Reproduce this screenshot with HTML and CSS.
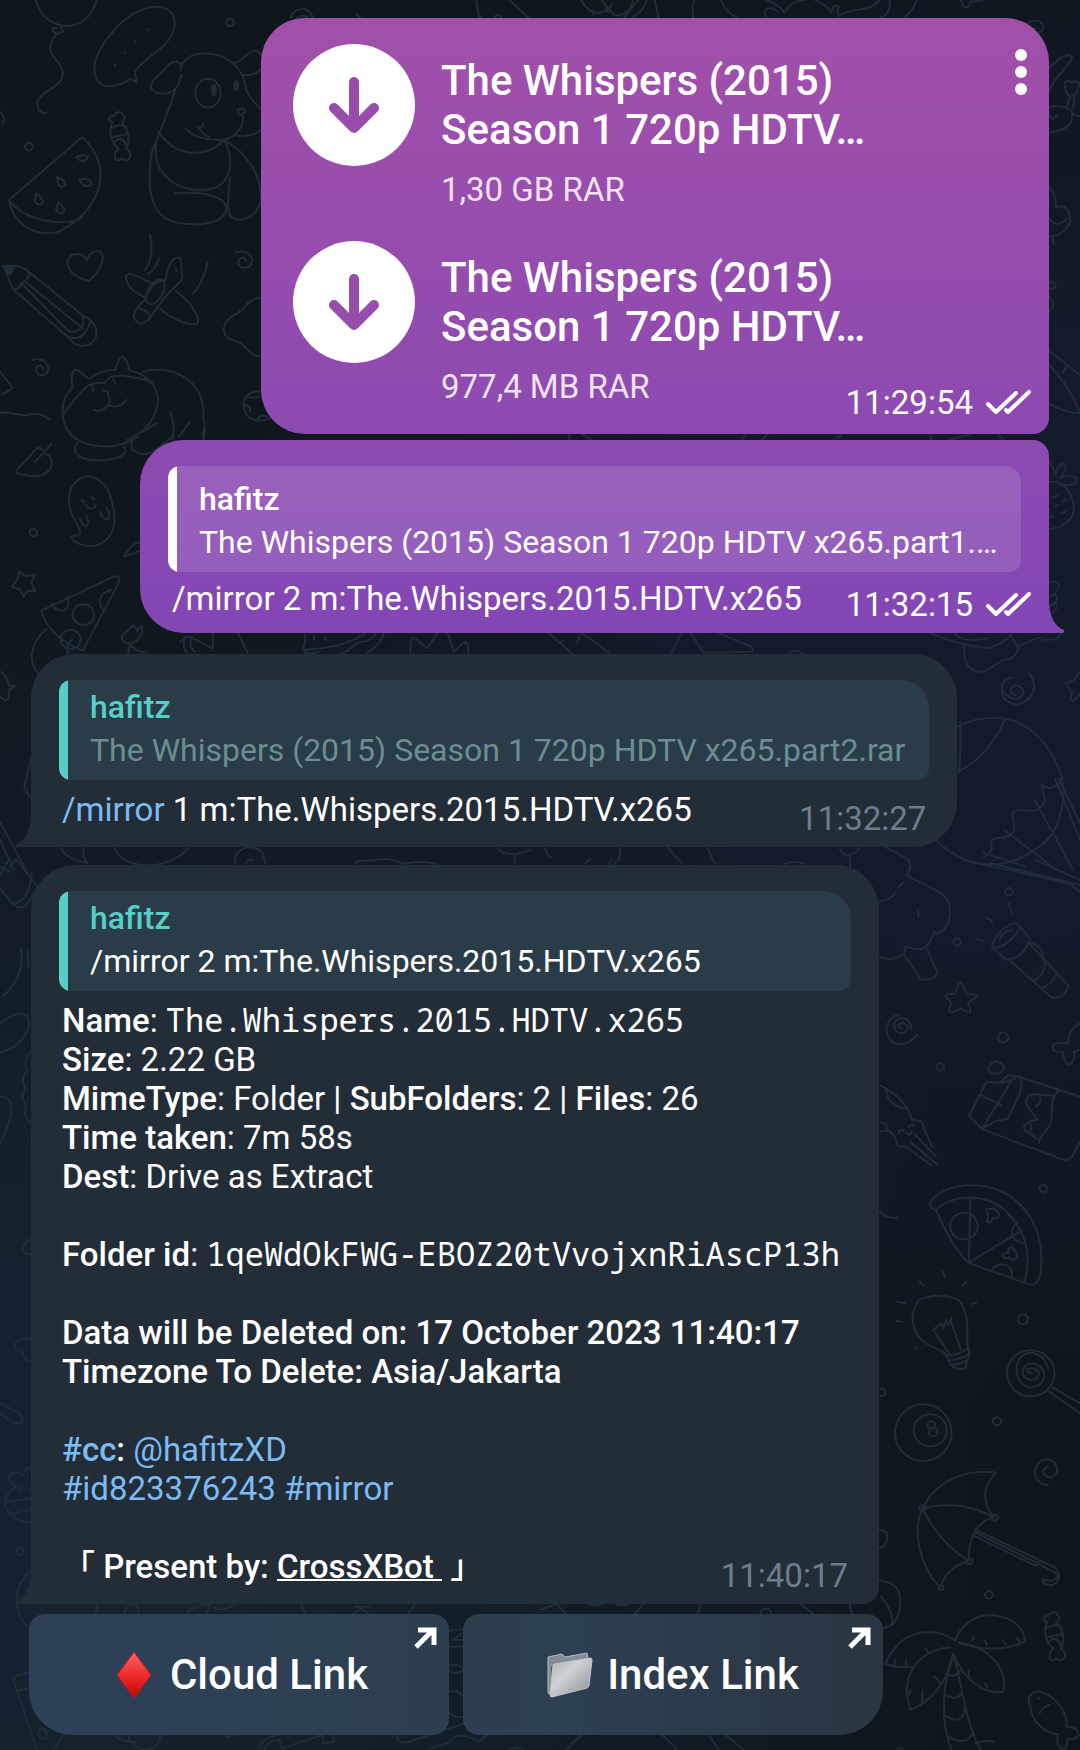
FILE: index.html
```html
<!DOCTYPE html>
<html lang="en">
<head>
<meta charset="utf-8">
<meta name="viewport" content="width=device-width, initial-scale=1">
<title>Chat</title>
<link rel="stylesheet" href="styles.css">
</head>
<body>
<svg class="wallpaper" viewBox="0 0 1080 1750" preserveAspectRatio="xMidYMin slice" aria-hidden="true">
  <defs>
    <g id="candy"><path d="M327 367C312 362 316 345 330 349C337 333 357 334 356 346C366 349 363 363 354 367C376 390 378 430 366 447C380 452 384 472 370 479C364 484 358 476 352 476C344 486 330 480 334 470C332 458 340 450 345 446C322 430 314 390 327 367ZM325 385Q342 370 363 379M327 412Q350 406 371 402M329 432C338 410 362 412 367 440"/></g>
    <g id="dot"><circle r="11"/></g>
  </defs>
  <!-- top left -->
  <g transform="scale(.3444 .3333)">
    <path d="M104 0C115 50 155 78 196 78C240 76 270 45 280 0M165 84C150 80 148 92 160 98C165 105 172 103 174 97C184 100 186 88 176 82M165 100C130 145 150 165 175 195C210 260 110 270 108 310Q110 342 135 339"/>
    <path d="M392 218C400 180 505 145 508 70C505 20 460 10 410 30C340 60 265 160 275 220C285 275 345 262 378 236L396 247Z"/>
    <path d="M428 90h1M392 126h1M363 159h1M333 195h1"/>
    <path d="M525 212C535 180 500 175 480 205C470 220 430 245 440 265C455 290 495 283 510 265C520 250 525 235 526 225M526 194C550 160 590 155 630 165C665 172 700 205 712 250C715 290 735 300 755 325M678 190C710 185 715 150 745 152L760 165M705 225C735 230 750 215 760 205M510 265C490 340 470 375 455 420C425 470 435 580 440 590C460 670 520 675 580 672C640 670 665 640 655 615C640 585 590 575 510 579M460 395C510 475 600 475 650 420C680 470 675 545 620 565C540 585 440 540 453 430M650 420C720 460 760 530 758 600C745 655 700 670 670 650C655 620 665 590 668 535M690 330Q702 322 713 332Q705 348 692 342ZM705 345C710 380 680 420 640 420C600 420 560 410 538 385M576 383C590 385 590 375 590 370M578 385Q585 400 605 410M680 405Q730 415 757 390"/>
    <ellipse cx="604" cy="279" rx="37" ry="43"/><ellipse class="fill" cx="621" cy="271" rx="6" ry="15"/><ellipse class="fill" cx="686" cy="257" rx="5" ry="14"/>
    <use href="#candy"/><use href="#dot" x="84" y="440"/><use href="#dot" x="668" y="67"/>
    <path d="M238 412L26 600C40 680 110 712 170 695C260 650 305 570 288 490Q272 440 238 412ZM26 600C70 660 180 685 240 652M220 472Q240 460 256 470Q250 485 235 483ZM166 532Q190 540 190 556Q178 566 168 552ZM230 538Q265 532 265 555Q245 568 230 538ZM106 580Q130 600 122 612Q105 618 101 600ZM170 607Q190 625 185 638Q168 646 163 628Z"/>
    <path d="M259 843C200 830 185 790 203 769C220 755 245 763 251 780C262 755 285 745 297 762C305 790 280 825 259 843Z"/>
    <path d="M10 798Q60 790 86 818Q140 862 242 948C285 965 290 1010 265 1030C240 1045 215 1038 196 1010L38 868ZM38 868Q58 870 62 850Q80 845 86 818M62 850L200 995Q245 1000 242 948M78 850L240 985M196 1010Q240 1030 262 968"/>
    <path class="fill" d="M10 798L38 805Q38 822 22 825Z"/>
    <path d="M435 704Q450 770 420 812M462 774Q450 810 430 822M603 788Q590 850 560 882M480 843C485 800 500 770 520 773C535 785 520 800 530 830C520 860 500 860 485 885C450 920 440 970 405 970C370 950 400 920 420 900C440 850 455 840 480 843ZM440 850C400 830 370 810 365 830C370 870 400 880 420 892M510 873C550 900 580 950 575 970C550 980 500 960 464 925M403 925Q430 930 435 950M511 805v8"/>
    <ellipse cx="451" cy="876" rx="22" ry="40" transform="rotate(28 451 876)"/>
    <path d="M684 758C720 745 745 775 725 798C705 812 685 795 695 778Q705 765 715 782M94 1080C130 1070 150 1100 135 1120C115 1135 98 1115 108 1100Q120 1090 125 1107M758 895C720 890 715 930 680 945C640 970 640 1015 680 1022C720 1030 715 1065 758 1070"/>
    <path d="M210 1165C205 1130 210 1105 225 1110L258 1137Q290 1110 334 1110Q345 1070 356 1070Q368 1075 376 1112C420 1120 450 1150 458 1190C462 1260 410 1300 370 1320M210 1165C170 1200 180 1260 195 1290L225 1320M183 1245C230 1180 250 1140 305 1150C320 1110 380 1130 445 1145M415 1115C520 1090 600 1160 590 1250Q600 1300 590 1325M300 1172L315 1175C310 1190 325 1200 315 1215Q290 1240 272 1230M315 1215Q340 1230 368 1200M267 1158l5 14M328 1137l6 15M495 1235Q510 1290 500 1320M405 1300L455 1270M520 1310L550 1268M0 1115L38 1165M5 1185L32 1168M0 1238C40 1235 60 1250 80 1245Q120 1235 145 1260"/>
    <path d="M755 1175C720 1170 705 1200 708 1220C712 1260 750 1270 785 1255M710 1215Q730 1215 725 1235M715 1190Q735 1195 750 1190M745 1262Q755 1240 775 1250"/>
    <path d="M845 54C850 20 900 15 908 54M862 54Q880 40 895 54M1035 42L1045 52M1383 0Q1385 30 1395 54M1478 0L1535 54M1435 54Q1445 35 1458 54M0 335Q18 355 8 370"/>
  </g>
  <!-- top right -->
  <g transform="translate(540 0) scale(.3444 .3333)">
    <path d="M120 0Q140 40 175 38Q205 30 210 10M178 0L215 45Q260 50 270 0M285 0L245 52M310 0Q300 35 270 50M332 0L345 54M155 30v15M190 25l8 12M445 54Q440 20 448 0M525 0Q540 40 570 50M655 50C645 20 675 20 690 35M655 0Q690 10 710 38Q730 0 770 0M800 0Q840 20 845 40Q850 10 868 20Q860 35 868 48C900 20 960 40 985 0M1015 0Q1020 40 990 54M1095 0Q1080 35 1060 52M1222 0C1230 30 1245 30 1250 5L1285 2M1410 80C1420 55 1455 55 1462 80Q1455 105 1435 98Q1430 85 1440 85"/>
    <path d="M1475 205L1510 175Q1540 155 1545 175Q1530 200 1495 240L1478 270M1523 250Q1530 235 1543 248Q1555 238 1566 250Q1560 290 1538 290Q1525 280 1523 250M1538 292L1530 320M1552 290L1548 325M1475 322C1520 310 1550 330 1545 345Q1550 390 1475 398M1475 340Q1490 370 1500 345M1550 345L1568 350M1475 560Q1500 580 1498 622C1530 610 1540 640 1540 665Q1520 710 1475 710M1475 650Q1500 690 1530 655M1488 712l4 22M1475 850Q1490 840 1498 855Q1495 870 1478 865M1475 890Q1490 895 1490 920L1478 935M1475 1050L1568 1125M1475 1090Q1540 1160 1568 1240Q1530 1240 1475 1210M1530 1095L1518 1120"/>
    <path d="M85 1302v18M120 1302L150 1320M600 1302l-15 18M660 1302l-15 18M860 1302q7 22 14 0M1135 1302v18M1190 1320L1250 1302M1330 1302l15 18"/>
  </g>
  <!-- second row left -->
  <g transform="translate(0 430) scale(.3444 .3333)">
    <path d="M195 0C220 50 330 70 400 20M225 38C205 60 225 88 270 90C330 95 380 75 360 50M385 30C370 60 400 80 440 68L500 20M590 0v30M150 42L100 97M125 60C110 45 100 60 88 78C70 100 45 115 47 128C90 145 145 145 150 100Q150 75 132 72"/>
    <path d="M250 140C215 145 195 180 202 230C210 270 235 290 232 312C225 320 210 315 206 320C220 350 265 350 285 345C340 320 340 260 320 200C310 160 280 138 250 140ZM237 210l7 8M267 202l6 6M250 225C255 240 275 240 278 225M232 265Q240 290 250 288Q262 278 250 257M290 245Q300 272 312 268Q325 255 310 235"/>
    <use href="#dot" x="97" y="308"/>
    <path d="M360 380Q380 340 407 335M360 380L407 362M56 424L72 438L100 434L92 460L103 484L80 482L68 500L58 478L34 470L50 450ZM120 542L330 440Q350 435 347 455L240 662Q140 620 120 542M150 522Q160 545 190 540Q205 520 195 500M325 480C290 485 280 520 300 540"/>
    <circle cx="242" cy="554" r="31"/><circle cx="205" cy="628" r="29"/><path d="M135 597C85 640 80 700 115 735M195 670Q195 635 210 630"/>
    <path d="M372 672L378 640C345 640 350 610 370 605C380 580 395 600 385 585C400 590 395 600 400 605C405 590 410 585 412 590C420 620 390 640 375 640Q390 665 425 668M525 635Q540 615 555 622L618 655V610M535 630Q530 660 545 668M555 625Q548 650 565 665M692 610L720 670M885 610C890 640 880 650 882 660C940 655 1000 650 1060 610M880 655Q885 680 925 665M990 670C1020 665 1030 630 1060 635Q1090 625 1090 610M1115 610Q1100 650 1065 670M912 618v10M945 622v10M1192 670Q1190 615 1205 625L1240 655L1270 610M1300 610L1318 665L1350 635Q1362 640 1360 670"/>
    <path d="M0 725Q20 735 25 765L45 768L25 780Q30 810 15 812L0 800M90 985L70 1075L90 1105M0 1175L75 1320M0 1230L40 1320M30 1310L45 1290"/>
    <path d="M175 1250Q190 1290 255 1300Q235 1280 245 1252M330 1250C360 1330 500 1320 550 1250M682 1302C675 1240 770 1230 770 1302M712 1302Q720 1285 735 1290M1030 1302C1040 1285 1070 1295 1090 1290Q1130 1280 1170 1302Q1220 1290 1270 1302M1445 1250Q1450 1275 1500 1272L1540 1260M1495 1275v27"/>
  </g>
  <!-- second row right -->
  <g transform="translate(540 430) scale(.3444 .3333)">
    <path d="M1478 95Q1490 110 1498 135Q1505 95 1525 103Q1530 120 1510 145Q1535 130 1560 145Q1560 170 1520 165M1478 155C1540 150 1560 230 1545 260Q1520 295 1478 298M1490 202l12 -6M1518 215l8 -6M1495 230l10 -5M1515 250l12 -5M1480 262l8 -4M1475 460Q1510 445 1505 475Q1490 500 1480 500Q1500 485 1502 510L1480 530Q1505 510 1500 535L1480 555"/>
    <path d="M25 610L92 670M55 640l12 -8M105 640Q115 630 112 620M120 610Q170 640 200 670M410 610L382 670M438 610L475 668L618 665Q620 650 590 640L520 610M722 670Q740 655 762 670M1135 610Q1220 645 1300 655Q1350 640 1370 610M1205 610Q1220 640 1300 625M1230 645C1235 660 1225 690 1250 715C1300 745 1310 700 1350 690C1390 680 1395 650 1380 640L1365 615M1390 650Q1450 615 1460 628Q1500 635 1515 610"/>
    <path d="M1382 795C1360 790 1365 765 1385 767C1415 775 1405 805 1380 807C1335 800 1325 745 1375 742M1420 730C1460 780 1410 835 1370 820Q1340 810 1340 780M1568 725L1550 750L1525 760L1545 785L1540 810Q1550 820 1568 790"/>
    <path d="M1213 888C1320 840 1450 850 1515 1040C1530 1100 1510 1210 1450 1250Q1350 1330 1235 1290Q1180 1265 1150 1230M1220 875Q1225 950 1215 1030M1350 865Q1310 970 1220 1022M1515 1040C1510 1080 1470 1080 1455 1062C1460 1090 1475 1115 1455 1130C1440 1160 1385 1125 1372 1150C1370 1180 1390 1195 1365 1215C1350 1230 1310 1215 1308 1240Q1320 1265 1290 1280M1495 1045L1568 1230M1505 1045L1568 1180M1437 1110L1548 1320M1348 1200L1500 1320M1287 1268L1410 1310"/>
    <path d="M15 1255Q20 1280 32 1282M230 1250Q240 1285 215 1302M130 1302l15 -15M200 1302l10 -12M370 1250Q400 1290 415 1302M485 1250L508 1302M870 1250C875 1290 920 1275 930 1250M900 1275v40M1000 1250C1060 1280 1080 1290 1075 1320M710 1302Q740 1290 768 1302"/>
  </g>
  <!-- third row left -->
  <g transform="translate(0 860) scale(.3444 .3333)">
    <path d="M0 85L35 130Q60 155 80 130L110 80L48 0M35 130Q85 130 92 40M0 45L25 0M0 20L30 35M60 263Q75 350 8 408M80 272L83 322M0 490C50 450 90 450 85 500Q60 565 0 577M90 575Q65 600 80 630Q55 660 75 685Q55 710 75 735Q65 770 90 790M0 710Q40 710 32 760Q20 820 0 850M90 1138Q65 1145 68 1175Q75 1185 90 1182"/>
  </g>
  <!-- third row right -->
  <g transform="translate(540 860) scale(.3444 .3333)">
    <path d="M1230 0L1540 72L1568 95M1310 10L1568 75M1440 0L1568 60M900 0v25M1070 0Q1080 20 1065 45C1110 80 1200 90 1190 160C1190 190 1175 220 1145 222L1145 212Q1130 270 1095 268L1058 260Q1070 290 1015 298L985 292M985 125C1010 120 1020 115 1030 100M1040 82L1055 68M1095 152Q1102 160 1098 172M1058 285L1105 358Q1140 365 1155 340L1122 265"/>
    <use href="#dot" x="1362" y="95"/><use href="#dot" x="1211" y="246"/><use href="#dot" x="1162" y="621"/><use href="#dot" x="1461" y="985"/><circle cx="1345" cy="532" r="15"/>
    <path d="M1360 128L1370 160M1296 173Q1308 178 1314 188M1266 238L1290 244M1312 262C1320 220 1360 190 1385 190Q1400 200 1380 225Q1340 270 1312 262L1350 298Q1400 300 1424 238L1385 190M1335 240Q1340 215 1372 210M1362 300L1485 412Q1520 420 1535 378L1420 250Q1450 250 1460 280V292M1435 362Q1470 340 1466 300M1455 385Q1490 370 1498 343"/>
    <path d="M1221 368Q1228 370 1238 402Q1270 402 1268 410L1243 430Q1255 455 1245 458L1220 445L1195 458Q1182 455 1195 428L1177 408Q1180 400 1205 402Q1212 372 1221 368Z"/>
    <path d="M1050 505C1030 500 1045 480 1065 495C1075 520 1040 530 1030 505C1020 465 1080 460 1078 510M1042 464C1000 470 990 540 1040 553Q1070 555 1095 525M1568 490Q1530 510 1535 550Q1490 545 1488 562Q1490 578 1518 575Q1525 620 1540 612Q1555 600 1550 575L1568 568"/>
    <path d="M985 675Q1060 710 1080 780Q1115 780 1112 798L1138 860M1005 690Q1010 740 1068 748M985 785Q1010 790 1010 812Q1035 825 1035 850Q1040 865 1060 858L1135 915M1075 845L1152 912M1090 825L1150 890M985 812L1010 812M1042 820Q1045 805 1055 812M1072 802Q1075 788 1085 798M1065 820Q1075 830 1080 815"/>
    <path d="M1300 630C1310 600 1330 598 1348 620C1345 640 1320 650 1300 630ZM1297 665L1245 768L1285 808L1515 898Q1540 905 1550 880L1568 845M1297 665L1335 668L1360 645L1395 652L1568 710M1280 705L1338 735M1395 652C1410 690 1370 740 1360 775L1320 785L1285 805L1370 660M1340 670L1380 655M1508 690C1470 720 1500 780 1470 810Q1450 835 1448 850M1495 707L1430 702C1405 710 1410 735 1420 745L1445 780C1420 780 1395 800 1410 812L1448 840M1450 705Q1460 725 1440 740M1425 790Q1430 810 1420 815"/>
    <path d="M1132 1030C1160 980 1250 960 1330 990C1440 1040 1470 1150 1450 1255Q1440 1285 1405 1268L1242 1208Q1190 1150 1150 1050Q1135 1050 1132 1030M1150 1050C1200 1000 1290 1000 1350 1050C1420 1120 1425 1200 1405 1268M1250 1012L1245 1208L1398 1112M1385 1088Q1365 1110 1372 1130Q1385 1150 1410 1150M1312 1230Q1330 1205 1360 1218Q1375 1235 1368 1250M1295 1048Q1330 1040 1333 1065Q1325 1080 1315 1073Q1310 1095 1298 1085Q1305 1070 1295 1048ZM1370 1162Q1390 1180 1383 1195Q1370 1205 1362 1192Q1345 1200 1343 1185Q1350 1175 1360 1180Q1355 1165 1370 1162Z"/>
    <circle cx="1231" cy="1098" r="40"/><path d="M985 1052Q1000 1075 1037 1074M1170 1235l6 17M1103 1265l10 12M1238 1265l-10 12"/>
  </g>
  <!-- bottom left -->
  <g transform="translate(0 1300) scale(.3444 .3333)">
    <path d="M90 118C50 105 30 140 50 152L65 150Q65 180 90 185M0 310L50 335Q75 355 60 370Q40 375 0 340M90 502Q70 505 68 525C30 505 20 535 32 548L48 560M65 562l-5 10M85 565v10M48 560Q10 585 15 615Q30 660 90 668M18 605Q60 600 90 595M25 640Q60 640 90 628"/>
    <use href="#dot" x="58" y="754"/>
    <path d="M90 810C30 870 40 950 88 985M283 912L278 942M360 942C370 905 405 895 400 942M545 942Q550 920 610 912L600 942M620 920Q640 940 682 912M872 912L890 942M1205 912L1185 942M1030 920L1072 922M1025 942L1050 925L1070 942M85 1115L42 1130Q35 1135 45 1160L108 1350M50 1172L85 1165M185 1305L155 1350M110 1300Q110 1285 125 1285Q140 1300 133 1315Q115 1322 110 1300M330 1305Q350 1325 395 1328M375 1305C370 1340 410 1350 430 1348Q465 1340 465 1305M655 1305Q660 1318 675 1305M750 1350Q760 1310 810 1305M765 1350Q780 1320 810 1320L820 1350M820 1345L935 1305L940 1330L972 1325L965 1305M1155 1305Q1150 1330 1180 1328L1350 1270M1250 1350C1260 1330 1300 1345 1320 1310Q1350 1300 1390 1325L1415 1305M1305 992L1345 988M1315 1020L1340 1000M1318 1020H1345M1305 1040H1345M1305 1095Q1340 1090 1345 1110Q1330 1125 1305 1115M1305 1175Q1335 1170 1345 1190M1305 1240Q1320 1255 1345 1250M1480 1350Q1500 1335 1520 1350"/>
  </g>
  <!-- bottom right -->
  <g transform="translate(540 1300) scale(.3444 .3333)">
    <path d="M1100 0C1060 60 1090 120 1140 140C1180 160 1180 160 1185 180Q1200 215 1235 205L1248 160C1230 120 1250 90 1235 40Q1230 15 1215 0Q1160 -25 1100 0M1142 90L1165 70L1170 85L1180 60L1185 75L1195 55V70M1142 90L1188 160M1195 70L1222 148M1180 168Q1235 160 1245 140M1185 182Q1240 175 1248 155M1195 195Q1235 190 1245 175M1038 5L1060 10M1035 63L1052 66M1093 140l-5 8M1255 12l12 -5"/>
    <circle cx="1402" cy="58" r="15"/><circle cx="1327" cy="364" r="12"/><use href="#dot" x="992" y="277"/>
    <circle cx="1425" cy="220" r="69"/><path d="M1428 220C1410 220 1410 200 1430 205C1460 210 1450 240 1425 240C1390 235 1395 190 1430 190C1480 200 1475 260 1420 262C1370 250 1370 155 1430 158Q1465 165 1475 205M1488 262L1568 310M1478 275L1568 340"/>
    <ellipse cx="1113" cy="398" rx="82" ry="85"/><circle cx="1133" cy="391" r="48"/><circle cx="1136" cy="375" r="11"/><circle cx="1141" cy="396" r="13"/>
    <path d="M1475 502Q1465 500 1462 515C1465 540 1500 535 1502 510C1500 470 1450 465 1437 510Q1435 550 1475 556"/>
    <path d="M1111 625C1150 540 1240 505 1325 518C1280 560 1285 610 1318 652C1270 660 1240 720 1246 784Q1180 800 1163 862C1100 800 1080 690 1111 625C1200 605 1260 620 1318 652M1111 625Q1160 730 1246 784M1265 698L1445 790L1490 815C1515 830 1495 850 1460 838Q1455 855 1490 855C1520 835 1505 810 1490 800L1262 688M1255 705L1440 798L1448 785"/>
    <circle cx="1111" cy="624" r="9"/><circle cx="1320" cy="653" r="9"/><circle cx="1247" cy="784" r="9"/><circle cx="1164" cy="864" r="7"/><use href="#dot" x="1303" y="885"/>
    <path d="M985 688Q1010 690 1008 720Q1000 745 985 744M985 842C1040 845 1050 880 1045 920Q1040 980 995 985M990 890Q1030 940 1022 975M900 912Q900 930 908 942M0 930L40 915L48 912L75 942M140 912Q160 920 180 912M220 912Q240 920 260 912M300 912L275 942M465 912L458 942M755 912L795 942M640 942C640 920 670 920 670 940"/>
    <path d="M1205 1022C1230 960 1280 935 1340 950C1390 965 1410 1000 1407 1025C1350 1055 1270 1050 1215 1027M1205 1022C1150 980 1050 980 1003 1092Q1040 1105 1085 1100M1190 1042C1100 1050 1040 1130 1076 1230C1130 1210 1190 1140 1200 1060M1215 1027C1300 1040 1360 1100 1345 1175C1290 1185 1230 1140 1200 1062M1200 1062C1165 1150 1165 1280 1195 1350M1200 1062C1225 1150 1235 1270 1280 1350M1180 1120Q1200 1140 1222 1110M1175 1185Q1210 1205 1225 1180M1175 1245Q1230 1285 1235 1215M1185 1310Q1240 1340 1255 1300M1265 1330Q1290 1320 1318 1325M1255 1022l5 -12M1297 1036l-5 -14M1352 1032l-8 -12M1392 1025l-8 -12M1030 1095v-18M1062 1100v-20M1068 1190l8 -20M1110 1205v-35M1162 1150l-15 -20M1130 1060l-12 -15M1245 1130v-20M1298 1162l-5 -12"/>
    <use href="#candy" x="1146" y="600"/>
    <path d="M1425 1225C1405 1180 1440 1170 1460 1178C1510 1200 1530 1240 1530 1280Q1560 1280 1565 1305Q1545 1325 1530 1315Q1535 1345 1515 1348Q1495 1330 1505 1303C1460 1300 1430 1260 1425 1225M1447 1195h2M1450 1240Q1460 1220 1480 1215M75 1350L120 1305M355 1305L400 1350M490 1305L520 1350M540 1305L590 1350M1035 1350Q1045 1335 1055 1350"/>
  </g>
</svg>

<main class="chat">
  <article class="bubble out files">
    <div class="docs">
      <div class="doc">
        <button class="download" type="button" aria-label="Download">
          <svg viewBox="0 0 122 122"><path d="M61 38V83M41 64L61 84L81 64"/></svg>
        </button>
        <div class="doc-text">
          <div class="title">The Whispers (2015)<br>Season 1 720p HDTV…</div>
          <div class="size">1,30 GB RAR</div>
        </div>
      </div>
      <div class="doc">
        <button class="download" type="button" aria-label="Download">
          <svg viewBox="0 0 122 122"><path d="M61 38V83M41 64L61 84L81 64"/></svg>
        </button>
        <div class="doc-text">
          <div class="title">The Whispers (2015)<br>Season 1 720p HDTV…</div>
          <div class="size">977,4 MB RAR</div>
        </div>
      </div>
    </div>
    <button class="menu" type="button" aria-label="More options">
      <svg viewBox="0 0 20 56"><circle cx="10" cy="11" r="6"/><circle cx="10" cy="28" r="6"/><circle cx="10" cy="45" r="6"/></svg>
    </button>
    <div class="meta"><time>11:29:54</time><svg class="ticks" viewBox="0 0 46 26"><path d="M3 14L11 22L31 3M21 20L23 22L44 2"/></svg></div>
  </article>

  <article class="bubble out command">
    <div class="reply"><div class="who">hafitz</div><div class="quote">The Whispers (2015) Season 1 720p HDTV x265.part1.…</div></div>
    <div class="row">
      <p class="text">/mirror 2 m:The.Whispers.2015.HDTV.x265</p>
      <div class="meta"><time>11:32:15</time><svg class="ticks" viewBox="0 0 46 26"><path d="M3 14L11 22L31 3M21 20L23 22L44 2"/></svg></div>
    </div>
    <svg class="tail" viewBox="0 0 16 30"><path d="M0 0C1 14 6 24 15 27Q16 30 13 30H0Z"/></svg>
  </article>

  <article class="bubble in">
    <div class="reply"><div class="who">hafitz</div><div class="quote dim">The Whispers (2015) Season 1 720p HDTV x265.part2.rar</div></div>
    <div class="row">
      <p class="text"><a href="#mirror">/mirror</a> 1 m:The.Whispers.2015.HDTV.x265</p>
      <div class="meta"><time>11:32:27</time></div>
    </div>
    <svg class="tail" viewBox="0 0 16 30"><path d="M16 0C15 14 10 24 1 27Q0 30 3 30H16Z"/></svg>
  </article>

  <article class="bubble in result">
    <div class="reply"><div class="who">hafitz</div><div class="quote">/mirror 2 m:The.Whispers.2015.HDTV.x265</div></div>
    <div class="row">
      <div class="text">
        <p><b>Name</b>: <code>The.Whispers.2015.HDTV.x265</code></p>
        <p><b>Size</b>: 2.22 GB</p>
        <p><b>MimeType</b>: Folder | <b>SubFolders</b>: 2 | <b>Files</b>: 26</p>
        <p><b>Time taken</b>: 7m 58s</p>
        <p class="last"><b>Dest</b>: Drive as Extract</p>
        <p class="last"><b>Folder id</b>: <code>1qeWdOkFWG-EBOZ20tVvojxnRiAscP13h</code></p>
        <p><b>Data will be Deleted on: 17 October 2023 11:40:17</b></p>
        <p class="last"><b>Timezone To Delete: Asia/Jakarta</b></p>
        <p><b><a href="#cc">#cc</a>:</b> <a href="#hafitzXD">@hafitzXD</a></p>
        <p class="last"><a href="#id823376243">#id823376243</a> <a href="#mirror">#mirror</a></p>
        <p><b>「 Present by: <a class="bot" href="#CrossXBot">CrossXBot&nbsp;</a> 」</b></p>
      </div>
      <div class="meta"><time>11:40:17</time></div>
    </div>
    <svg class="tail" viewBox="0 0 16 30"><path d="M16 0C15 14 10 24 1 27Q0 30 3 30H16Z"/></svg>
  </article>

  <nav class="links">
    <a class="link" href="#cloud">
      <svg class="emoji diamond" viewBox="-6 0 42 48"><defs><linearGradient id="red" x2="0" y2="1"><stop stop-color="#ff6262"/><stop offset=".5" stop-color="#ee2d2d"/><stop offset="1" stop-color="#c80000"/></linearGradient></defs><path d="M18 1L35 24L18 47L1 24Z" fill="url(#red)" stroke="#b41c20" stroke-width="1"/></svg>
      <span>Cloud Link</span>
      <svg class="arrow" viewBox="0 0 24 24"><path d="M3 21L20 4M5 4H21V19"/></svg>
    </a>
    <a class="link" href="#index">
      <svg class="emoji" viewBox="0 0 46 46"><defs><linearGradient id="paper" x2="1" y2="1"><stop stop-color="#a9adb2"/><stop offset=".4" stop-color="#d0d3d6"/><stop offset="1" stop-color="#85898e"/></linearGradient></defs><path d="M1 5L15 2L18 5L40 1L41 7L5 43L1 41Z" fill="#848d95" stroke="#b4bbc1"/><path d="M4 15L40 7L36 36L6 43Z" fill="#4c555d"/><path d="M6 14Q6 12 8 12L43 6Q45 6 45 8L42 33Q42 35 40 36L5 45Q3 45 3 43Z" fill="url(#paper)" stroke="#c4c8cb"/></svg>
      <span>Index Link</span>
      <svg class="arrow" viewBox="0 0 24 24"><path d="M3 21L20 4M5 4H21V19"/></svg>
    </a>
  </nav>
</main>
</body>
</html>
```
FILE: styles.css
```css
* {
  box-sizing: border-box;
}

body {
  margin: 0;
  position: relative;
  min-height: 100vh;
  overflow-x: hidden;
  background:
    radial-gradient(circle at 0 85%, #16222f 10%, transparent 55%),
    radial-gradient(circle at 90% 36%, #131a29 20%, transparent 52%),
    #0f161c;
  color: #fff;
  font: 33px/39px Roboto, "Noto Sans CJK JP", sans-serif;
}

p {
  margin: 0;
}

b,
.who,
.title,
.link {
  font-weight: 500;
}

button {
  border: 0;
  padding: 0;
  background: none;
}

svg {
  display: block;
}

a {
  color: #7cbbf3;
  text-decoration: none;
}

code {
  font: 32px/1 "Droid Sans Mono", "Noto Sans Mono", "DejaVu Sans Mono", monospace;
}

.wallpaper {
  position: absolute;
  inset: 0;
  width: 100%;
  height: 100%;
  fill: none;
  stroke: #202d38;
  stroke-width: 6;
  stroke-linecap: round;
  stroke-linejoin: round;
}

.wallpaper .fill {
  fill: #202d38;
}

.chat {
  position: relative;
  display: flex;
  flex-direction: column;
  align-items: flex-start;
  padding: 18px 31px 15px 29px;
}

.bubble {
  position: relative;
  max-width: 100%;
  padding: 26px 28px 9px;
}

.out {
  align-self: flex-end;
}

.in {
  margin-left: 2px;
  background: #222d38;
}

.files {
  display: grid;
  width: 788px;
  padding: 26px 18px 12px 32px;
  border-radius: 44px 44px 16px 44px;
  background: linear-gradient(#a150a9, #8c4ab1);
}

.files > * {
  grid-area: 1 / 1;
}

.docs {
  display: grid;
  gap: 32px;
  padding-bottom: 16px;
}

.doc {
  display: flex;
  align-items: flex-start;
  gap: 26px;
}

.download {
  flex: none;
  width: 122px;
  height: 122px;
  border-radius: 50%;
  background: #fff;
}

.download path {
  fill: none;
  stroke: #964dac;
  stroke-width: 10;
  stroke-linecap: round;
  stroke-linejoin: round;
}

.doc-text {
  padding-top: 12px;
}

.title {
  font-size: 42px;
  line-height: 49px;
}

.size {
  margin-top: 16px;
  color: #f2e4f6;
}

.menu {
  justify-self: end;
  align-self: start;
  width: 20px;
  height: 56px;
}

.menu svg {
  fill: #fff;
}

.meta {
  flex: none;
  justify-self: end;
  align-self: end;
  display: flex;
  align-items: center;
  gap: 12px;
  margin-left: auto;
}

.ticks {
  width: 46px;
  height: 26px;
  fill: none;
  stroke: #fff;
  stroke-width: 4;
  stroke-linecap: round;
  stroke-linejoin: round;
}

.command {
  width: 909px;
  margin-top: 6px;
  border-radius: 44px 16px 0 44px;
  background: linear-gradient(#8d4bb1, #8346b5);
}

.reply {
  padding: 6px 24px 8px 31px;
  border-radius: 12px 28px 12px 12px;
  background: linear-gradient(to right, #55cfc7 9px, #2a3c47 9px);
  font-size: 32px;
  line-height: 43px;
}

.out .reply {
  padding: 12px 12px 8px 31px;
  border-radius: 12px 16px 12px 12px;
  background: linear-gradient(to right, #fff 9px, #ffffff1f 9px);
}

.in .who {
  color: #55cfc7;
}

.quote {
  overflow: hidden;
  text-overflow: ellipsis;
  white-space: nowrap;
}

.dim {
  color: #6d8d92;
}

.row {
  display: flex;
  padding: 10px 3px 0;
}

.command .row {
  margin-right: -10px;
  padding: 7px 0 0 4px;
}

.text {
  min-width: 0;
  padding-bottom: 9px;
  overflow-wrap: anywhere;
}

.command .text {
  padding-bottom: 6px;
}

.text p {
  min-height: 39px;
}

.text .last {
  margin-bottom: 39px;
}

.in .meta {
  color: #6d7d8d;
}

.bot {
  color: inherit;
  text-decoration: underline;
  text-decoration-thickness: 2px;
}

.in:not(.result) {
  margin-top: 21px;
  border-radius: 44px 44px 44px 0;
}

.result {
  width: 848px;
  margin-top: 18px;
  border-radius: 44px 44px 16px 0;
}

.result .meta {
  margin-left: -127px;
}

.result .text {
  flex: 1;
}

.tail {
  position: absolute;
  bottom: 0;
  width: 16px;
  height: 30px;
}

.in .tail {
  right: 100%;
  fill: #222d38;
}

.out .tail {
  left: 100%;
  fill: #8346b5;
}

.links {
  display: grid;
  grid-template-columns: 1fr 1fr;
  gap: 14px;
  width: 854px;
  max-width: 100%;
  margin-top: 10px;
}

.link {
  position: relative;
  display: flex;
  align-items: center;
  justify-content: center;
  gap: 14px;
  height: 121px;
  border-radius: 16px 16px 16px 44px;
  background: linear-gradient(to right, #2e4056, #2d4054 60%, #2d3e4f);
  color: #fff;
  font-size: 42px;
  line-height: 49px;
}

.link + .link {
  border-radius: 16px 16px 44px 16px;
  background: linear-gradient(to right, #2d3e4f, #2d3f53 25%, #2a3641);
}

.emoji {
  width: 46px;
  height: 46px;
}

.diamond {
  width: 42px;
  height: 48px;
  margin-right: 4px;
}

.arrow {
  position: absolute;
  top: 12px;
  right: 12px;
  width: 24px;
  height: 24px;
  fill: none;
  stroke: #fff;
  stroke-width: 5;
}
```
